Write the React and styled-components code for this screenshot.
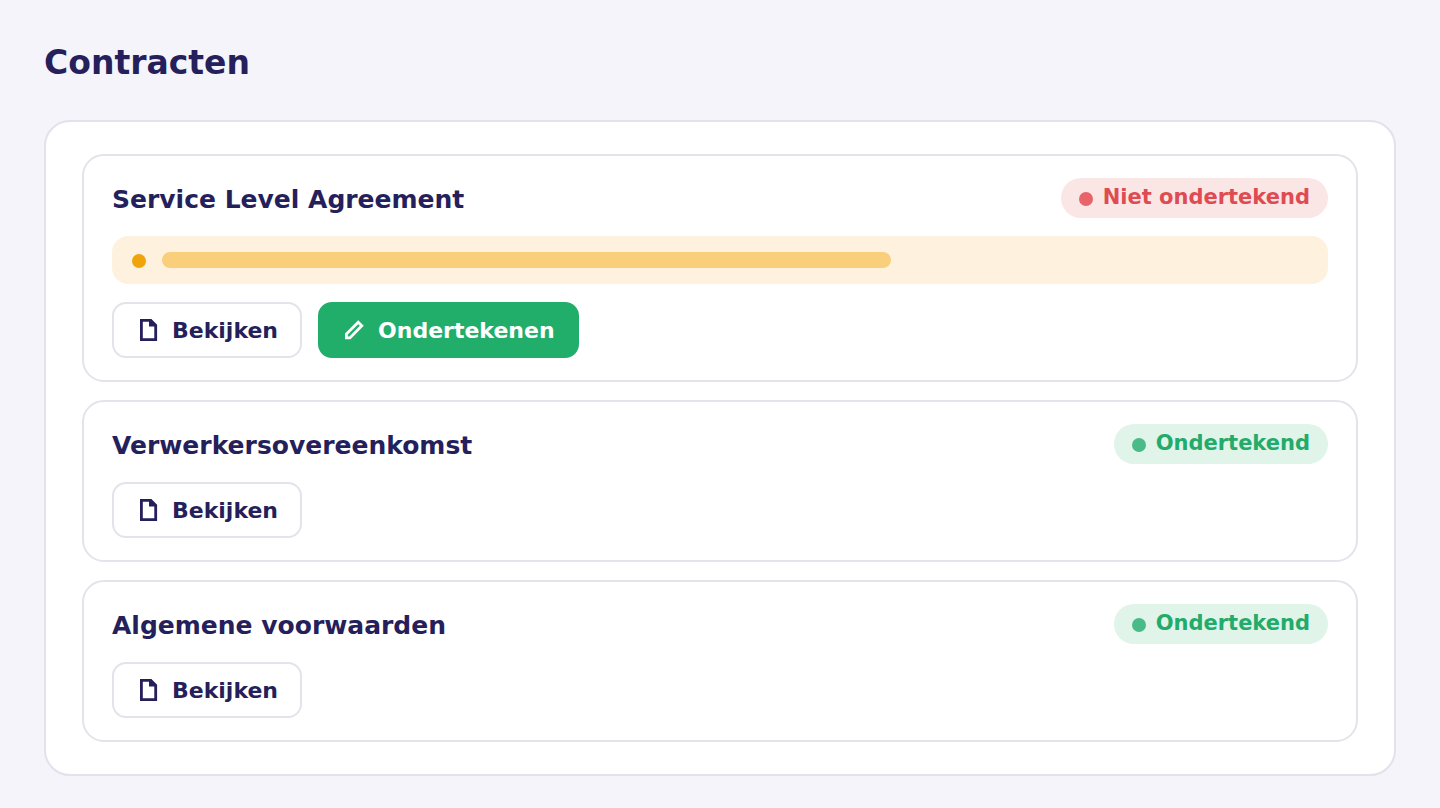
import React from "react";

import styled, { createGlobalStyle } from "styled-components";

// Contracts shown in the list
const contracts = [
  { id: "sla", title: "Service Level Agreement", signed: false, progress: 62 },
  { id: "dpa", title: "Verwerkersovereenkomst", signed: true },
  { id: "terms", title: "Algemene voorwaarden", signed: true },
];

const GlobalStyle = createGlobalStyle`
  * {
    box-sizing: border-box;
  }

  body {
    margin: 0;
    background-color: #f5f4fa;
    color: #251f5b;
    font-family: "DejaVu Sans", Verdana, sans-serif;
    font-weight: 700;
  }
`;

const Page = styled.main`
  padding: 42px 44px 32px;
`;

const PageTitle = styled.h1`
  margin: 0 0 36px;
  font-size: 33px;
  line-height: 42px;
`;

const Panel = styled.section`
  display: flex;
  flex-direction: column;
  gap: 18px;
  padding: 32px 36px;
  border: 2px solid #e2e1ec;
  border-radius: 26px;
  background-color: #ffffff;
`;

const Card = styled.article`
  display: flex;
  flex-direction: column;
  gap: 18px;
  padding: 22px 28px;
  border: 2px solid #e4e3ea;
  border-radius: 22px;
`;

const CardHeader = styled.header`
  display: flex;
  align-items: center;
  justify-content: space-between;
  gap: 16px;
`;

const CardTitle = styled.h2`
  margin: 0;
  padding-top: 4px;
  font-size: 25px;
  line-height: 36px;
`;

const Badge = styled.span`
  display: flex;
  align-items: center;
  gap: 10px;
  padding: 0 18px;
  border-radius: 20px;
  background-color: ${({ $signed }) => ($signed ? "#e0f4e9" : "#fbe6e6")};
  color: ${({ $signed }) => ($signed ? "#22ab6a" : "#de4c52")};
  font-size: 21px;
  line-height: 38px;
  white-space: nowrap;
`;

const BadgeLabel = styled.span`
  padding-bottom: 2px;
`;

const Dot = styled.span`
  flex: none;
  width: 14px;
  height: 14px;
  margin-top: 2px;
  border-radius: 50%;
  background-color: ${({ $color }) => $color};
`;

const Notice = styled.div`
  display: flex;
  align-items: center;
  gap: 16px;
  height: 48px;
  padding: 0 20px;
  border-radius: 16px;
  background-color: #fef2df;
`;

const Bar = styled.div`
  height: 16px;
  border-radius: 8px;
  background-color: #f9cf7b;
`;

const Actions = styled.div`
  display: flex;
  flex-wrap: wrap;
  gap: 16px;
`;

const Button = styled.button`
  display: flex;
  align-items: center;
  gap: 12px;
  height: 56px;
  padding: 0 22px;
  border: 2px solid ${({ $primary }) => ($primary ? "#21ae6b" : "#e4e3ea")};
  border-radius: 14px;
  background-color: ${({ $primary }) => ($primary ? "#21ae6b" : "#ffffff")};
  color: ${({ $primary }) => ($primary ? "#ffffff" : "#251f5b")};
  font: inherit;
  font-size: 22px;
  cursor: pointer;
`;

const Icon = styled.svg`
  flex: none;
  width: 24px;
  height: 24px;
  fill: none;
  stroke: currentColor;
  stroke-width: 2.8;
`;

const FileIcon = () => (
  <Icon viewBox="0 0 24 24" aria-hidden="true">
    <path d="M5.4 2.4H14.8L19.7 7.3V21.6H5.4Z" />
    <path d="M13 2V8.6H20.4V7L15.4 2Z" fill="currentColor" stroke="none" />
  </Icon>
);

const PenIcon = () => (
  <Icon viewBox="0 0 24 24" aria-hidden="true">
    <path d="M4.4 19.9V16L16.2 4.2L19.8 7.8L7.9 19.9Z" />
  </Icon>
);

const Contract = ({ title, signed, progress }) => (
  <Card>
    <CardHeader>
      <CardTitle>{title}</CardTitle>
      <Badge $signed={signed}>
        <Dot $color={signed ? "#4abb88" : "#e8636a"} />
        <BadgeLabel>{signed ? "Ondertekend" : "Niet ondertekend"}</BadgeLabel>
      </Badge>
    </CardHeader>
    {progress && (
      <Notice>
        <Dot $color="#f0a30a" />
        <Bar style={{ width: `${progress}%` }} />
      </Notice>
    )}
    <Actions>
      <Button type="button">
        <FileIcon />
        Bekijken
      </Button>
      {!signed && (
        <Button type="button" $primary>
          <PenIcon />
          Ondertekenen
        </Button>
      )}
    </Actions>
  </Card>
);

const App = () => {
  return (
    <>
      <GlobalStyle />
      <Page>
        <PageTitle>Contracten</PageTitle>
        <Panel>
          {contracts.map((contract) => (
            <Contract key={contract.id} {...contract} />
          ))}
        </Panel>
      </Page>
    </>
  );
};

export default App;
